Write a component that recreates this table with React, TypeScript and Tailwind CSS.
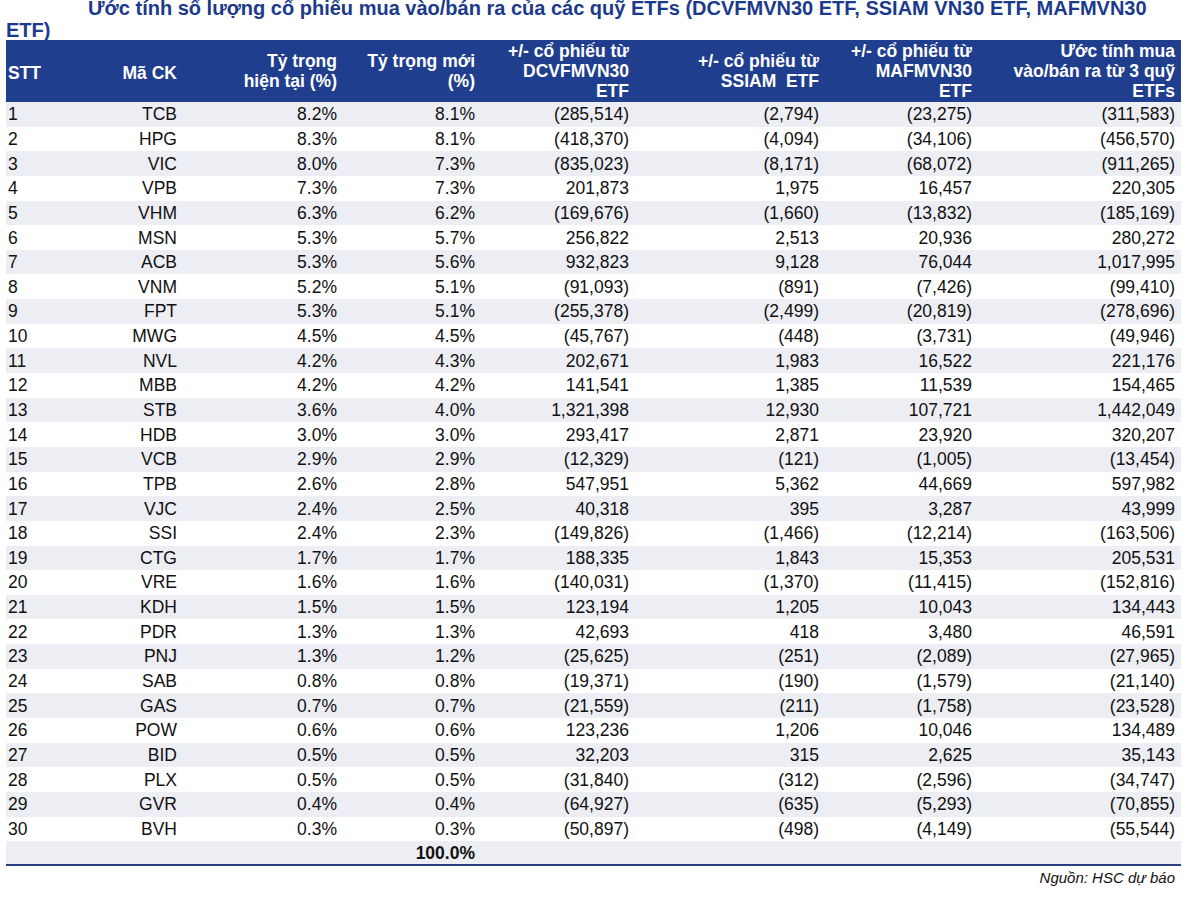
const rows: [string, string, string, string, string, string, string][] = [
  ["TCB", "8.2%", "8.1%", "(285,514)", "(2,794)", "(23,275)", "(311,583)"],
  ["HPG", "8.3%", "8.1%", "(418,370)", "(4,094)", "(34,106)", "(456,570)"],
  ["VIC", "8.0%", "7.3%", "(835,023)", "(8,171)", "(68,072)", "(911,265)"],
  ["VPB", "7.3%", "7.3%", "201,873", "1,975", "16,457", "220,305"],
  ["VHM", "6.3%", "6.2%", "(169,676)", "(1,660)", "(13,832)", "(185,169)"],
  ["MSN", "5.3%", "5.7%", "256,822", "2,513", "20,936", "280,272"],
  ["ACB", "5.3%", "5.6%", "932,823", "9,128", "76,044", "1,017,995"],
  ["VNM", "5.2%", "5.1%", "(91,093)", "(891)", "(7,426)", "(99,410)"],
  ["FPT", "5.3%", "5.1%", "(255,378)", "(2,499)", "(20,819)", "(278,696)"],
  ["MWG", "4.5%", "4.5%", "(45,767)", "(448)", "(3,731)", "(49,946)"],
  ["NVL", "4.2%", "4.3%", "202,671", "1,983", "16,522", "221,176"],
  ["MBB", "4.2%", "4.2%", "141,541", "1,385", "11,539", "154,465"],
  ["STB", "3.6%", "4.0%", "1,321,398", "12,930", "107,721", "1,442,049"],
  ["HDB", "3.0%", "3.0%", "293,417", "2,871", "23,920", "320,207"],
  ["VCB", "2.9%", "2.9%", "(12,329)", "(121)", "(1,005)", "(13,454)"],
  ["TPB", "2.6%", "2.8%", "547,951", "5,362", "44,669", "597,982"],
  ["VJC", "2.4%", "2.5%", "40,318", "395", "3,287", "43,999"],
  ["SSI", "2.4%", "2.3%", "(149,826)", "(1,466)", "(12,214)", "(163,506)"],
  ["CTG", "1.7%", "1.7%", "188,335", "1,843", "15,353", "205,531"],
  ["VRE", "1.6%", "1.6%", "(140,031)", "(1,370)", "(11,415)", "(152,816)"],
  ["KDH", "1.5%", "1.5%", "123,194", "1,205", "10,043", "134,443"],
  ["PDR", "1.3%", "1.3%", "42,693", "418", "3,480", "46,591"],
  ["PNJ", "1.3%", "1.2%", "(25,625)", "(251)", "(2,089)", "(27,965)"],
  ["SAB", "0.8%", "0.8%", "(19,371)", "(190)", "(1,579)", "(21,140)"],
  ["GAS", "0.7%", "0.7%", "(21,559)", "(211)", "(1,758)", "(23,528)"],
  ["POW", "0.6%", "0.6%", "123,236", "1,206", "10,046", "134,489"],
  ["BID", "0.5%", "0.5%", "32,203", "315", "2,625", "35,143"],
  ["PLX", "0.5%", "0.5%", "(31,840)", "(312)", "(2,596)", "(34,747)"],
  ["GVR", "0.4%", "0.4%", "(64,927)", "(635)", "(5,293)", "(70,855)"],
  ["BVH", "0.3%", "0.3%", "(50,897)", "(498)", "(4,149)", "(55,544)"],
];

// cột: STT | Mã CK | hiện tại | mới | DCVF | SSIAM | MAFM | tổng
const GRID = "grid grid-cols-[94px_80px_160px_138px_154px_190px_153px_206px]";
const R = "text-right pr-[3px] whitespace-nowrap";
const LAST = "text-right pr-[6px] whitespace-nowrap";

export default function App() {
  return (
    <div
      className="w-[1200px] h-[898px] bg-white overflow-hidden text-[#111]"
      style={{ fontFamily: '"Liberation Sans", Arial, sans-serif' }}
    >
      <div className="h-[43px] -mt-[3px] text-[#1b3a8c] font-bold text-[20px] leading-[22px] pl-[6px]">
        <div className="pl-[82px] whitespace-nowrap">
          Ước tính số lượng cổ phiếu mua vào/bán ra của các quỹ ETFs (DCVFMVN30 ETF, SSIAM VN30 ETF, MAFMVN30
        </div>
        <div>ETF)</div>
      </div>

      <div className="ml-[6px] w-[1175px]">
        <div className={`${GRID} h-[62px] bg-[#203e8e] text-white font-bold text-[17.5px] leading-[20px] items-center`}>
          <div className="pl-[2px] pt-[4px]">STT</div>
          <div className={`${R} pt-[4px]`}>Mã CK</div>
          <div className={R}>Tỷ trọng<br />hiện tại (%)</div>
          <div className={R}>Tỷ trọng mới<br />(%)</div>
          <div className={R}>+/- cổ phiếu từ<br />DCVFMVN30<br />ETF</div>
          <div className={R}>+/- cổ phiếu từ<br />SSIAM&nbsp; ETF</div>
          <div className={R}>+/- cổ phiếu từ<br />MAFMVN30<br />ETF</div>
          <div className={LAST}>Ước tính mua<br />vào/bán ra từ 3 quỹ<br />ETFs</div>
        </div>

        {rows.map((r, i) => (
          <div
            key={r[0]}
            className={`${GRID} h-[24.65px] items-center text-[17.5px] leading-[20px] ${i % 2 === 0 ? "bg-[#ededf4]" : "bg-white"}`}
          >
            <div className="pl-[2px]">{i + 1}</div>
            {r.map((v, j) => (
              <div key={j} className={j === 6 ? LAST : R}>
                {v}
              </div>
            ))}
          </div>
        ))}

        <div className={`${GRID} h-[24.65px] items-center text-[17.5px] leading-[20px] bg-[#ededf4] border-b-2 border-[#2a3f7e]`}>
          <div />
          <div />
          <div />
          <div className={`${R} font-bold`}>100.0%</div>
        </div>

        <div className="text-right pr-[6px] pt-[3px] italic text-[15px] leading-[18px]">
          Nguồn: HSC dự báo
        </div>
      </div>
    </div>
  );
}
